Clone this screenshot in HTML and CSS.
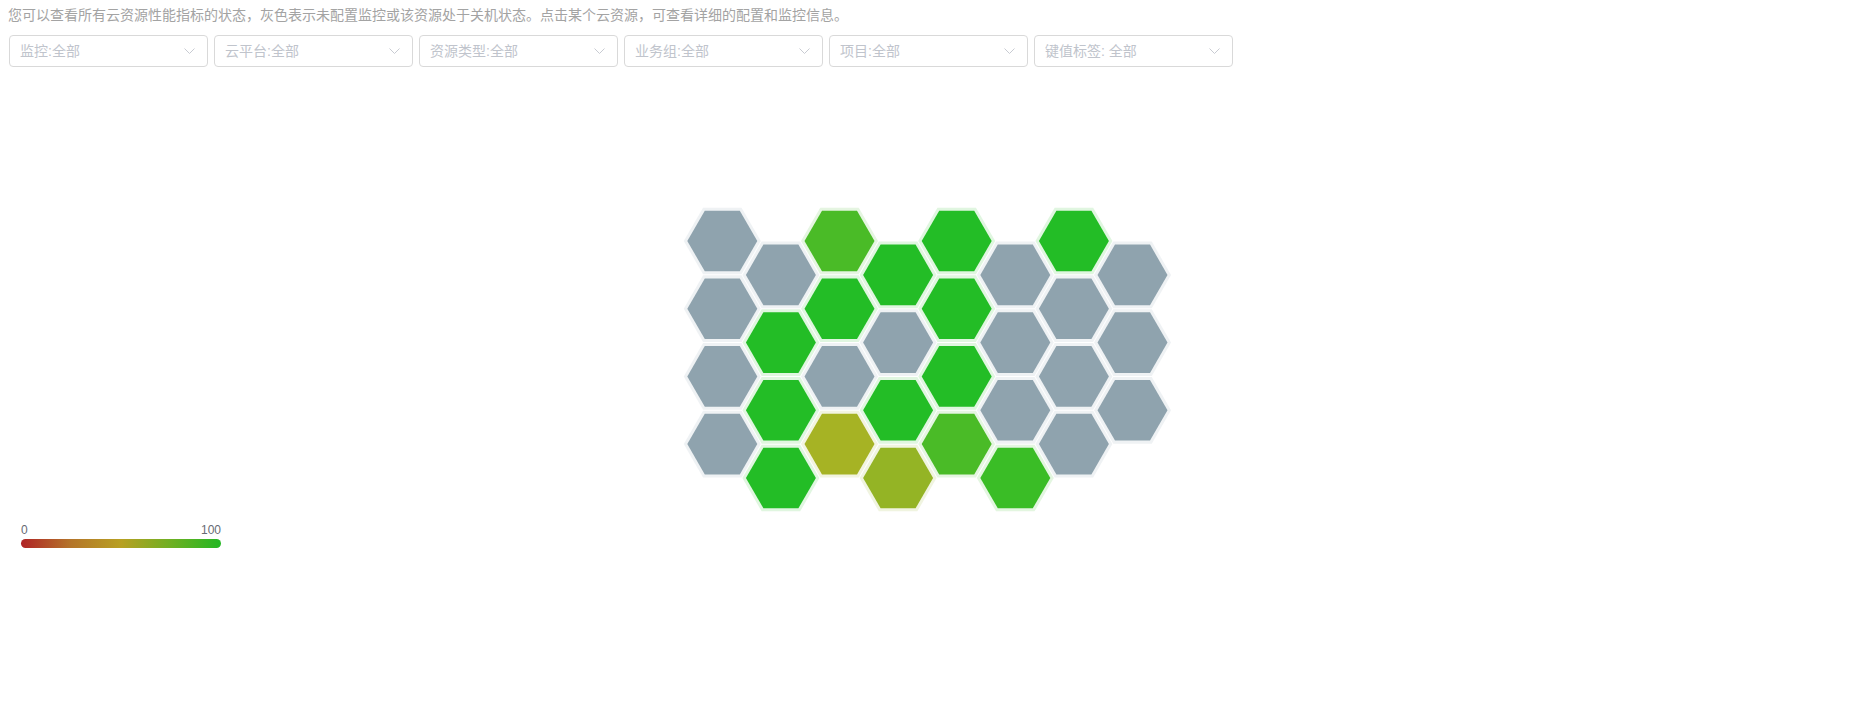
FILE: index.html
```html
<!DOCTYPE html>
<html lang="zh">
<head>
<meta charset="utf-8">
<title>资源状态</title>
<link rel="stylesheet" href="styles.css">
</head>
<body>
<div class="page">
  <p class="desc">您可以查看所有云资源性能指标的状态，灰色表示未配置监控或该资源处于关机状态。点击某个云资源，可查看详细的配置和监控信息。</p>
  <div class="filters">
    <div class="select"><span class="ph">监控:全部</span><svg class="arrow" width="11" height="6" viewBox="0 0 11 6"><path d="M0.5 0.5 L5.5 5.5 L10.5 0.5" /></svg></div>
    <div class="select"><span class="ph">云平台:全部</span><svg class="arrow" width="11" height="6" viewBox="0 0 11 6"><path d="M0.5 0.5 L5.5 5.5 L10.5 0.5" /></svg></div>
    <div class="select"><span class="ph">资源类型:全部</span><svg class="arrow" width="11" height="6" viewBox="0 0 11 6"><path d="M0.5 0.5 L5.5 5.5 L10.5 0.5" /></svg></div>
    <div class="select"><span class="ph">业务组:全部</span><svg class="arrow" width="11" height="6" viewBox="0 0 11 6"><path d="M0.5 0.5 L5.5 5.5 L10.5 0.5" /></svg></div>
    <div class="select"><span class="ph">项目:全部</span><svg class="arrow" width="11" height="6" viewBox="0 0 11 6"><path d="M0.5 0.5 L5.5 5.5 L10.5 0.5" /></svg></div>
    <div class="select"><span class="ph">键值标签: 全部</span><svg class="arrow" width="11" height="6" viewBox="0 0 11 6"><path d="M0.5 0.5 L5.5 5.5 L10.5 0.5" /></svg></div>
  </div>

  <div class="chart">
    <svg class="hexmap" width="500" height="320" viewBox="0 0 500 320">
      <defs>
        <polygon id="halo" points="38.5,0 19.25,33.34 -19.25,33.34 -38.5,0 -19.25,-33.34 19.25,-33.34"/>
        <polygon id="core" points="35,0 17.5,30.31 -17.5,30.31 -35,0 -17.5,-30.31 17.5,-30.31"/>
      </defs>
      <g class="hx gray" transform="translate(44.3,41)"><use href="#halo" class="h"/><use href="#core"/></g>
      <g class="hx gray" transform="translate(44.3,108.7)"><use href="#halo" class="h"/><use href="#core"/></g>
      <g class="hx gray" transform="translate(44.3,176.4)"><use href="#halo" class="h"/><use href="#core"/></g>
      <g class="hx gray" transform="translate(44.3,244.1)"><use href="#halo" class="h"/><use href="#core"/></g>
      <g class="hx gray" transform="translate(102.9,74.9)"><use href="#halo" class="h"/><use href="#core"/></g>
      <g class="hx green" transform="translate(102.9,142.6)"><use href="#halo" class="h"/><use href="#core"/></g>
      <g class="hx green" transform="translate(102.9,210.3)"><use href="#halo" class="h"/><use href="#core"/></g>
      <g class="hx green" transform="translate(102.9,278)"><use href="#halo" class="h"/><use href="#core"/></g>
      <g class="hx lime" transform="translate(161.5,41)"><use href="#halo" class="h"/><use href="#core"/></g>
      <g class="hx green" transform="translate(161.5,108.7)"><use href="#halo" class="h"/><use href="#core"/></g>
      <g class="hx gray" transform="translate(161.5,176.4)"><use href="#halo" class="h"/><use href="#core"/></g>
      <g class="hx olive" transform="translate(161.5,244.1)"><use href="#halo" class="h"/><use href="#core"/></g>
      <g class="hx green" transform="translate(220.1,74.9)"><use href="#halo" class="h"/><use href="#core"/></g>
      <g class="hx gray" transform="translate(220.1,142.6)"><use href="#halo" class="h"/><use href="#core"/></g>
      <g class="hx green" transform="translate(220.1,210.3)"><use href="#halo" class="h"/><use href="#core"/></g>
      <g class="hx olivegreen" transform="translate(220.1,278)"><use href="#halo" class="h"/><use href="#core"/></g>
      <g class="hx green" transform="translate(278.7,41)"><use href="#halo" class="h"/><use href="#core"/></g>
      <g class="hx green" transform="translate(278.7,108.7)"><use href="#halo" class="h"/><use href="#core"/></g>
      <g class="hx green" transform="translate(278.7,176.4)"><use href="#halo" class="h"/><use href="#core"/></g>
      <g class="hx lime" transform="translate(278.7,244.1)"><use href="#halo" class="h"/><use href="#core"/></g>
      <g class="hx gray" transform="translate(337.3,74.9)"><use href="#halo" class="h"/><use href="#core"/></g>
      <g class="hx gray" transform="translate(337.3,142.6)"><use href="#halo" class="h"/><use href="#core"/></g>
      <g class="hx gray" transform="translate(337.3,210.3)"><use href="#halo" class="h"/><use href="#core"/></g>
      <g class="hx mid" transform="translate(337.3,278)"><use href="#halo" class="h"/><use href="#core"/></g>
      <g class="hx green" transform="translate(395.9,41)"><use href="#halo" class="h"/><use href="#core"/></g>
      <g class="hx gray" transform="translate(395.9,108.7)"><use href="#halo" class="h"/><use href="#core"/></g>
      <g class="hx gray" transform="translate(395.9,176.4)"><use href="#halo" class="h"/><use href="#core"/></g>
      <g class="hx gray" transform="translate(395.9,244.1)"><use href="#halo" class="h"/><use href="#core"/></g>
      <g class="hx gray" transform="translate(454.5,74.9)"><use href="#halo" class="h"/><use href="#core"/></g>
      <g class="hx gray" transform="translate(454.5,142.6)"><use href="#halo" class="h"/><use href="#core"/></g>
      <g class="hx gray" transform="translate(454.5,210.3)"><use href="#halo" class="h"/><use href="#core"/></g>
    </svg>
  </div>

  <div class="legend">
    <div class="legend-labels"><span>0</span><span>100</span></div>
    <div class="legend-bar"></div>
  </div>
</div>
</body>
</html>
```
FILE: styles.css
```css
* { box-sizing: border-box; }

html, body {
  margin: 0;
  padding: 0;
  background: #ffffff;
}

body {
  font-family: "Liberation Sans", "Noto Sans CJK SC", sans-serif;
  font-size: 14px;
  color: #333;
}

.page {
  padding: 5px 8px 0 8px;
}

.desc {
  margin: 0;
  line-height: 20px;
  font-size: 14px;
  color: #a3a3a3;
  white-space: nowrap;
}

.filters {
  display: flex;
  gap: 6px;
  margin-top: 10px;
  padding-left: 1px;
}

.select {
  width: 199px;
  height: 32px;
  border: 1px solid #d9d9d9;
  border-radius: 4px;
  display: flex;
  align-items: center;
  justify-content: space-between;
  padding: 0 12px 0 10px;
  background: #fff;
}

.ph {
  color: #c0c4cc;
  font-size: 14px;
  line-height: 20px;
}

.arrow {
  fill: none;
  stroke: #c8cbd2;
  stroke-width: 1;
}

.chart {
  display: flex;
  justify-content: center;
  margin-top: 133px;
  margin-left: -8px;
  margin-right: -8px;
}

.hexmap {
  display: block;
}

.hx .h { fill-opacity: 0.14; }

.gray { fill: #8fa3ae; }
.green { fill: #23bd26; }
.lime { fill: #4abb27; }
.mid { fill: #3abd26; }
.olive { fill: #a6b324; }
.olivegreen { fill: #94b425; }

.legend {
  width: 200px;
  margin-left: 13px;
  margin-top: 3px;
}

.legend-labels {
  display: flex;
  justify-content: space-between;
  font-size: 12px;
  line-height: 14px;
  color: #666a73;
}

.legend-bar {
  margin-top: 2px;
  height: 9px;
  border-radius: 5px;
  background: linear-gradient(to right, #b02326 0%, #b4752a 25%, #b8a022 50%, #6eb023 75%, #23b723 100%);
}
```
